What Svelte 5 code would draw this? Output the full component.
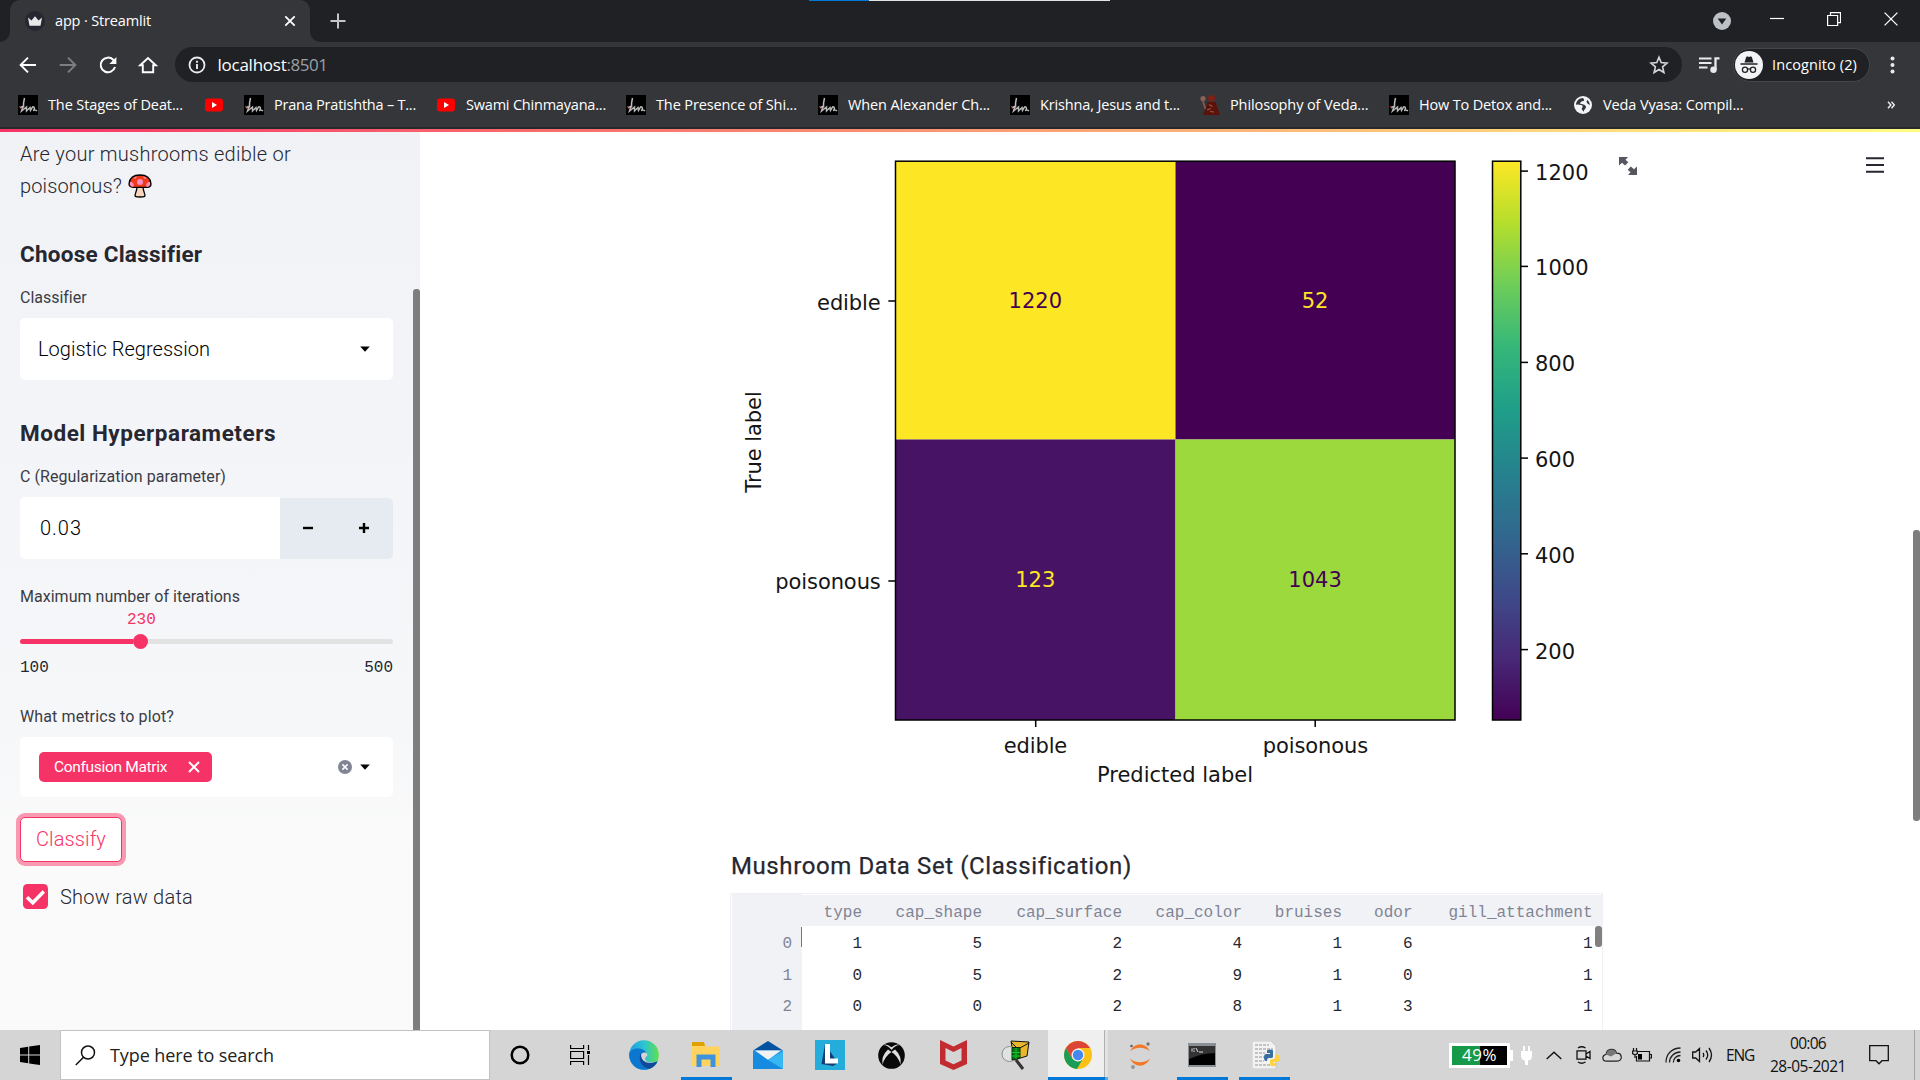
<script>
  // Spreads a label's letters so that it takes up the given width.
  function fit(node, width) {
    const natural = node.getBoundingClientRect().width;
    node.style.letterSpacing = `${(width - natural) / node.textContent.length}px`;
  }

  const bookmarks = [
    { icon: 'sign', text: 'The Stages of Deat...', x: 18, w: 135 },
    { icon: 'tube', text: '', x: 204, w: 0 },
    { icon: 'sign', text: 'Prana Pratishtha – T...', x: 244, w: 142 },
    { icon: 'tube', text: 'Swami Chinmayana...', x: 436, w: 140 },
    { icon: 'sign', text: 'The Presence of Shi...', x: 626, w: 141 },
    { icon: 'sign', text: 'When Alexander Ch...', x: 818, w: 142 },
    { icon: 'sign', text: 'Krishna, Jesus and t...', x: 1010, w: 140 },
    { icon: 'monk', text: 'Philosophy of Veda...', x: 1200, w: 138.5 },
    { icon: 'sign', text: 'How To Detox and...', x: 1389, w: 133 },
    { icon: 'globe', text: 'Veda Vyasa: Compil...', x: 1573, w: 140.5 }
  ].map((b, i, all) => ({ ...b, slot: (all[i + 1]?.x ?? 1886) - b.x }));

  const columns = ['type', 'cap_shape', 'cap_surface', 'cap_color', 'bruises', 'odor', 'gill_attachment'];
  const rows = [
    [1, 5, 2, 4, 1, 6, 1],
    [0, 5, 2, 9, 1, 0, 1],
    [0, 0, 2, 8, 1, 3, 1]
  ];

  const ticks = [
    { v: 1200, y: 171.1, w: 53.5 },
    { v: 1000, y: 266.4, w: 53.5 },
    { v: 800, y: 362.4, w: 40 },
    { v: 600, y: 458.1, w: 40 },
    { v: 400, y: 553.8, w: 40 },
    { v: 200, y: 649.6, w: 40 }
  ];
  const viridis = ['#fde725', '#b4de2c', '#6dcd59', '#35b779', '#1f9e89', '#26828e', '#31688e', '#3e4a89', '#482878', '#440154'];
</script>

{#snippet bookmarkIcon(kind)}
  {#if kind === 'sign'}
    <svg width="20" height="20" viewBox="0 0 20 20">
      <rect width="20" height="20" fill="#000" />
      <path d="M6.500 3c-.8 3-1.200 6-1 9.500" fill="none" stroke="#bdbdbd" stroke-width="1.500" />
      <path d="M2 12.500l3-1-1.500 4.500 5-4v4l3.500-3.500.5 2.800 2-3.300c2.500-1 2.500 3 .5 3.500 2-.5 2-1 4 .5" fill="none" stroke="#b8b8b8" stroke-width="1.500" />
      <path d="M1 11l2 3" stroke="#a3362c" />
    </svg>
  {:else if kind === 'tube'}
    <svg width="20" height="20" viewBox="0 0 20 20">
      <rect x="1" y="3.5" width="18" height="13" rx="3" fill="#f00" />
      <path d="M8 7v6l5-3z" fill="#fff" />
    </svg>
  {:else if kind === 'monk'}
    <svg width="20" height="20" viewBox="0 0 20 20">
      <circle cx="3" cy="3.500" r="2.600" fill="#8a6258" />
      <path d="M2.500 5l3 9" stroke="#8f5d52" stroke-width="1.500" />
      <circle cx="11.500" cy="3.300" r="3.300" fill="#842013" />
      <path d="M7.500 7h8l2 6 2.500 7H3l2.500-6z" fill="#5a1209" />
      <path d="M9 9.500l3.500 2M7 15l4-1.500M10 16.500l4 .5" stroke="#99564a" stroke-width="1.200" fill="none" />
    </svg>
  {:else}
    <svg width="20" height="20" viewBox="0 0 20 20">
      <circle cx="10" cy="10" r="9" fill="#f1f3f4" />
      <path d="M10 3C5 3 3 7 3 10c2-1 3 0 5 0s2 2 1 3 1 3 2 4c-1-2 2-3 2-5s-3-3-5-3 0-3 2-3 1-2 0-3zM14 5c-1 2 0 4 3 5-1-3-1-4-3-5z" fill="#35363a" />
    </svg>
  {/if}
{/snippet}

{#snippet caret()}
  <svg class="caret" width="10" height="6" viewBox="0 0 10 6"><path d="M.2.500h9.600L5 5.800z" fill="#000" /></svg>
{/snippet}

<div class="screen">
  <header class="tabs">
    <div class="tab">
      <svg width="20" height="20" viewBox="0 0 20 20">
        <circle cx="10" cy="10" r="10" fill="#262730" />
        <path d="M3 6.5l3.5 3L10 5.3l3.5 4.2 3.5-3-1.5 8.2h-11z" fill="#e8e8ea" />
      </svg>
      <span class="tab-title"><span use:fit={96}>app · Streamlit</span></span>
      <svg width="12" height="12" viewBox="0 0 12 12"><path d="M1.3 1.3l9.4 9.4M10.7 1.3l-9.4 9.4" stroke="#fff" stroke-width="1.8" /></svg>
    </div>
    <svg class="new-tab" width="16" height="16" viewBox="0 0 16 16"><path d="M8 .5v15M.5 8h15" stroke="#c3c5c8" stroke-width="2" /></svg>
    <div class="loading"></div>
    <div class="window-controls">
      <svg width="18" height="18" viewBox="0 0 18 18"><circle cx="9" cy="9" r="9" fill="#bdc1c6" /><path d="M4.7 6.5h8.6L9 12.5z" fill="#202124" /></svg>
      <svg width="14" height="14" viewBox="0 0 14 14"><path d="M0 6.500h14" stroke="#fff" stroke-width="1.2" /></svg>
      <svg width="14" height="14" viewBox="0 0 14 14"><path d="M.6 3.500h10v10h-10zM3.500 3V.6h10v10H11" fill="none" stroke="#fff" stroke-width="1.2" /></svg>
      <svg width="14" height="14" viewBox="0 0 14 14"><path d="M.6.6l12.800 12.800M13.400.6L.6 13.400" stroke="#fff" stroke-width="1.3" /></svg>
    </div>
  </header>

  <div class="toolbar">
    <nav class="nav">
      <svg width="20" height="20" viewBox="0 0 20 20"><path d="M18 10H3M10 2.600L2.600 10l7.400 7.400" fill="none" stroke="#fff" stroke-width="1.900" /></svg>
      <svg width="20" height="20" viewBox="0 0 20 20"><path d="M1.700 10H17M10 2.600l7.400 7.400-7.400 7.400" fill="none" stroke="#7d7e81" stroke-width="1.900" /></svg>
      <svg width="20" height="20" viewBox="0 0 20 20"><path d="M17 12a7.300 7.300 0 1 1-1.800-7.200L17 6.700" fill="none" stroke="#fff" stroke-width="2" /><path d="M18.400 2v7h-7z" fill="#fff" /></svg>
      <svg width="20" height="20" viewBox="0 0 20 20"><path d="M2.200 10.200L10 3l7.800 7.200h-2.600v7H4.800v-7z" fill="none" stroke="#fff" stroke-width="1.900" /></svg>
    </nav>
    <div class="address">
      <svg width="18" height="18" viewBox="0 0 18 18"><circle cx="9" cy="9" r="7.500" fill="none" stroke="#e8eaed" stroke-width="1.800" /><path d="M9 8v5M9 4.800v1.900" stroke="#e8eaed" stroke-width="1.900" /></svg>
      <span class="host"><span use:fit={69}>localhost</span><span class="port" use:fit={41}>:8501</span></span>
      <svg width="20" height="20" viewBox="0 0 20 20"><path d="M10 2.200l2.200 5.400 5.800.5-4.400 3.800 1.300 5.600-4.900-3-4.900 3 1.300-5.600L2 8.100l5.800-.5z" fill="none" stroke="#d3d5d8" stroke-width="1.600" /></svg>
    </div>
    <svg class="queue" width="22" height="18" viewBox="0 0 22 18"><path d="M0 2.500h12.500M0 7h12.500M0 11.500h8.500" stroke="#e8eaed" stroke-width="2.100" /><path d="M16.500 14V2.300H20.500" fill="none" stroke="#e8eaed" stroke-width="2.300" /><circle cx="14.500" cy="13.700" r="3.200" fill="#e8eaed" /></svg>
    <div class="profile">
      <svg width="28" height="28" viewBox="0 0 28 28">
        <circle cx="14" cy="14" r="14" fill="#f1f3f4" />
        <path d="M9.500 11.500l1.600-5.300c.3-.8 1-.7 2.900-.2 1.900-.5 2.600-.6 2.900.2l1.600 5.300zM5.500 12.300h17v1.500h-17z" fill="#202124" />
        <path d="M12.500 18.300q1.500-1 3 0" fill="none" stroke="#202124" stroke-width="1.200" />
        <circle cx="10" cy="18.800" r="2.600" fill="none" stroke="#202124" stroke-width="1.300" /><circle cx="18" cy="18.800" r="2.600" fill="none" stroke="#202124" stroke-width="1.300" />
      </svg>
      <span use:fit={85}>Incognito (2)</span>
    </div>
    <svg class="dots" width="5" height="18" viewBox="0 0 5 18"><circle cx="2.500" cy="2.500" r="2" fill="#e8eaed" /><circle cx="2.500" cy="9" r="2" fill="#e8eaed" /><circle cx="2.500" cy="15.500" r="2" fill="#e8eaed" /></svg>
  </div>

  <div class="bookmarks">
    {#each bookmarks as b}
      <div class="bookmark" style="width: {b.slot}px">
        {@render bookmarkIcon(b.icon)}
        {#if b.text}<span use:fit={b.w}>{b.text}</span>{/if}
      </div>
    {/each}
    <svg width="10" height="10" viewBox="0 0 10 10"><path d="M2 1.800L4.800 5l-2.800 3.200M5.500 1.800L8.300 5l-2.800 3.200" fill="none" stroke="#e8eaed" stroke-width="1.500" /></svg>
  </div>
  <div class="decoration"></div>

  <div class="page">
    <aside>
      <div class="side-body">
        <p class="intro">
          <span use:fit={271}>Are your mushrooms edible or</span>
          <span class="intro-end"><span use:fit={102}>poisonous?</span>
            <svg width="24" height="24" viewBox="0 0 24 24">
              <path d="M9 12.500c0 4-1.500 6.500-2 8.500-.2 1.500 1 2 5 2s5.200-.5 5-2c-.5-2-2-4.500-2-8.500z" fill="#f7d4bb" stroke="#000" stroke-width="1.300" />
              <path d="M1 10C1.500 4 6 1 12 1s10.500 3 11 9c0 2.500-2 3.300-4 3.300H5C3 13.300 1 12.500 1 10z" fill="#f03a17" stroke="#000" stroke-width="1.300" />
              <circle cx="12" cy="8" r="3" fill="#fb8cc0" /><path d="M2 8c3-.5 4.500 2.500 3.500 4.700C3 12.700 1.500 12 2 8zM22 8c-3-.5-4.500 2.500-3.500 4.700 2.500 0 4-.7 3.500-4.700zM5.500 4l3-1.800c.5 2-1.500 3.500-3 1.800zM18.500 4l-3-1.800c-.5 2 1.500 3.500 3 1.800z" fill="#fb8cc0" />
            </svg>
          </span>
        </p>

        <h2><span use:fit={182}>Choose Classifier</span></h2>
        <div class="label"><span use:fit={66}>Classifier</span></div>
        <div class="select">
          <span use:fit={172}>Logistic Regression</span>
          {@render caret()}
        </div>

        <h2><span use:fit={256}>Model Hyperparameters</span></h2>
        <div class="label"><span use:fit={206}>C (Regularization parameter)</span></div>
        <div class="number">
          <div class="number-value"><span use:fit={42}>0.03</span></div>
          <div class="steppers">
            <svg width="10" height="10" viewBox="0 0 10 10"><path d="M0 5h10" stroke="#000" stroke-width="2.400" /></svg>
            <svg width="10" height="10" viewBox="0 0 10 10"><path d="M0 5h10M5 0v10" stroke="#000" stroke-width="2.400" /></svg>
          </div>
        </div>

        <div class="label iterations"><span use:fit={220}>Maximum number of iterations</span></div>
        <div class="slider">
          <div class="slider-value">230</div>
          <div class="track"><div class="filled"></div><div class="thumb"></div></div>
          <div class="limits"><span>100</span><span>500</span></div>
        </div>

        <div class="label metrics"><span use:fit={154}>What metrics to plot?</span></div>
        <div class="select multi">
          <div class="tag">
            <span use:fit={113}>Confusion Matrix</span>
            <svg width="12" height="12" viewBox="0 0 12 12"><path d="M1 1l10 10M11 1L1 11" stroke="#fff" stroke-width="2" /></svg>
          </div>
          <svg class="clear" width="14" height="14" viewBox="0 0 14 14"><circle cx="7" cy="7" r="7" fill="#808495" /><path d="M4.400 4.400l5.200 5.200M9.600 4.400L4.400 9.600" stroke="#fff" stroke-width="1.500" /></svg>
          {@render caret()}
        </div>

        <button><span use:fit={70}>Classify</span></button>
        <div class="check">
          <svg width="25" height="25" viewBox="0 0 25 25"><rect width="25" height="25" rx="4.500" fill="#f63366" /><path d="M4 13.200l5.800 5.500L20.800 7.500" fill="none" stroke="#fff" stroke-width="3.600" /></svg>
          <span use:fit={133}>Show raw data</span>
        </div>
      </div>
      <div class="side-scroll"></div>
    </aside>

    <main>
      <svg class="chart" width="880" height="708" viewBox="730 132 880 708">
        <defs>
          <linearGradient id="viridis" x1="0" y1="0" x2="0" y2="1">
            {#each viridis as color, i}<stop offset={i / 9} stop-color={color} />{/each}
          </linearGradient>
        </defs>
        <rect x="896" y="161" width="279.500" height="278.500" fill="#fde725" />
        <rect x="1175.500" y="161" width="279.500" height="278.500" fill="#440154" />
        <rect x="896" y="439.500" width="279.500" height="280.500" fill="#471365" />
        <rect x="1175.500" y="439.500" width="279.500" height="280.500" fill="#9bd93c" />
        <rect x="895.500" y="161.200" width="559.500" height="558.800" fill="none" stroke="#000" stroke-width="1.500" />
        <rect x="1492.500" y="161.200" width="28.300" height="558.800" fill="url(#viridis)" stroke="#000" stroke-width="1.500" />
        <path d="M888.300 301h7M888.300 581h7M1035.700 720v7M1315.200 720v7" stroke="#000" stroke-width="1.500" />
        {#each ticks as t}
          <path d="M1521 {t.y}h7" stroke="#000" stroke-width="1.500" />
          <text x="1535" y={t.y + 9} textLength={t.w}>{t.v}</text>
        {/each}
        <text class="mid dark" x="1035.300" y="307.500" textLength="53.500">1220</text>
        <text class="mid bright" x="1315" y="307.500" textLength="26.500">52</text>
        <text class="mid bright" x="1035.300" y="586.500" textLength="40">123</text>
        <text class="mid dark" x="1315" y="586.500" textLength="53.500">1043</text>
        <text class="end" x="880.600" y="310" textLength="63.500">edible</text>
        <text class="end" x="880.800" y="589" textLength="105.500">poisonous</text>
        <text class="mid" x="1035.500" y="752.500" textLength="63.500">edible</text>
        <text class="mid" x="1315.500" y="752.500" textLength="105.500">poisonous</text>
        <text class="mid" x="1175" y="781.500" textLength="156">Predicted label</text>
        <text class="mid" transform="translate(761 442) rotate(-90)" textLength="101.500">True label</text>
      </svg>

      <h3><span use:fit={400}>Mushroom Data Set (Classification)</span></h3>
      <div class="frame">
        <div class="grid head">
          <span></span>
          {#each columns as c}<span>{c}</span>{/each}
        </div>
        {#each rows as row, i}
          <div class="grid">
            <span class="index">{i}</span>
            {#each row as cell}<span>{cell}</span>{/each}
          </div>
        {/each}
        <div class="index-scroll"></div>
        <div class="table-scroll"></div>
      </div>

      <svg class="expand" width="18" height="18" viewBox="0 0 18 18"><path d="M0 0h9L6.500 2.700l2.800 2.600-3.200 3.200L3 5.700 0 8.500zM18 18H9l2.500-2.700-2.800-2.600 3.200-3.200L15 12.300l3-2.800z" fill="#55565e" /></svg>
      <svg class="menu" width="18" height="16" viewBox="0 0 18 16"><path d="M0 1.200h18M0 8h18M0 14.800h18" stroke="#262730" stroke-width="2" /></svg>
      <div class="page-scroll"></div>
    </main>
  </div>

  <footer class="taskbar">
    <div class="start">
      <svg width="20" height="20" viewBox="0 0 20 20"><path d="M0 2.900l8.200-1.200v7.800H0zM9.200 1.500L20 0v9.500H9.200zM0 10.500h8.200v7.800L0 17.100zM9.200 10.500H20V20L9.200 18.500z" fill="#000" /></svg>
    </div>
    <div class="search">
      <svg width="21" height="21" viewBox="0 0 21 21"><circle cx="13" cy="7.500" r="6.500" fill="none" stroke="#111" stroke-width="1.500" /><path d="M8.500 12.200L.8 20" stroke="#111" stroke-width="1.500" /></svg>
      <span use:fit={164}>Type here to search</span>
    </div>
    <div class="apps">
      <div class="app"><svg width="20" height="20" viewBox="0 0 20 20"><circle cx="10" cy="10" r="8.300" fill="none" stroke="#000" stroke-width="2.500" /></svg></div>
      <div class="app view"><svg width="20" height="20" viewBox="0 0 20 20"><path d="M.6 0v3.500h13V0M.6 20v-3.500h13V20M.6 6.500h13v7H.6zM18.500 0v5M18.500 10v10" fill="none" stroke="#000" stroke-width="1.200" /><path d="M17 6h3v3h-3z" /></svg></div>
      <div class="app">
        <svg width="30" height="30" viewBox="0 0 30 30">
          <defs>
            <linearGradient id="edgeTop"><stop offset="0" stop-color="#1f9de0" /><stop offset=".5" stop-color="#2cc3d5" /><stop offset="1" stop-color="#5fe04b" /></linearGradient>
          </defs>
          <circle cx="15" cy="15" r="14.800" fill="url(#edgeTop)" />
          <path d="M.2 14C1 9.500 6 8.300 9.500 8.500c6 .3 8.500 4 8.500 7 0 2-1.500 2.500-1.500 4 0 2 3 3 6 3s5.500-1.300 6-1C26 27 21 29.800 15 29.800 6 29.800 0 22.500.2 14z" fill="#0d76cf" />
          <path d="M11.500 14c-2.500 6 1 13.500 9 14.700 3.500-1.200 6.500-4 8-7.200-2 1-4 1.300-6 1.300-7 0-8.500-3-8-6.500z" fill="#10499a" />
          <path d="M12 15c1-4 8-3 6 1-1 1.500-2 2-1.500 4 1.500 3 7 2.500 10 1.500-5 3-14 1.500-14.500-6.500z" fill="#d4d4d4" />
        </svg>
      </div>
      <div class="app open"><svg width="28" height="26" viewBox="0 0 28 26"><path d="M0 1h11.500l2 3.500H28V24H0z" fill="#ffd35d" /><path d="M0 0h12l1 4H0z" fill="#e0a100" /><path d="M4.500 12.500h19V25h-5v-7.500h-9V25h-5z" fill="#3f93dc" /></svg></div>
      <div class="app"><svg width="30" height="28" viewBox="0 0 30 28"><path d="M0 9.500L15 0l15 9.500z" fill="#0553a0" /><path d="M0 9.500h30V28H0z" fill="#1f8ee6" /><path d="M2 9.500h26L15 19z" fill="#f2f2f2" /><path d="M30 10L12 20.500 0 28h30z" fill="#36b7f2" /><path d="M0 10l15 9 15 9H0z" fill="#178be0" /></svg></div>
      <div class="app"><svg width="30" height="30" viewBox="0 0 30 30"><path d="M0 0h30v30H0z" fill="#24acdb" /><path d="M10 4L6.500 24 18 26l5-3z" fill="#153d72" /><path d="M10 4h5v14.500h8v5H10z" fill="#fff" /></svg></div>
      <div class="app"><svg width="27" height="27" viewBox="0 0 27 27"><circle cx="13.500" cy="13.500" r="13.300" fill="#090909" /><path d="M5.500 3q3-1.500 8 2.200Q18.500 1.500 21.500 3q-4 0-8 5-4-5-8-5zM10 7.500Q3 14 4.500 22.500 7 14 13.500 10q6.500 4 9 12.500Q24 14 17 7.500L13.500 10z" fill="#ddd" /></svg></div>
      <div class="app"><svg width="27" height="30" viewBox="0 0 27 30"><path d="M0 0l13.500 6.500L27 0v24l-13.500 6L0 24zM5.500 8v12.500l8 3.700 8-3.700V8l-8 4z" fill="#c22c31" fill-rule="evenodd" /></svg></div>
      <div class="app"><svg width="30" height="30" viewBox="0 0 30 30"><path d="M10 1l18 1-2 14-13 4z" fill="#e9b72c" stroke="#111" /><path d="M10 2l7 7 11-6" fill="none" stroke="#111" /><circle cx="8.500" cy="14" r="7.500" fill="#dfe3e1" stroke="#8d8d8d" /><path d="M11 7.500h8V18l-8 2z" fill="#0a7514" stroke="#042b06" /><path d="M15 8v11M11 12.500h8M11 16h8" stroke="#15c62a" /><path d="M15 20l7 9" stroke="#333" stroke-width="3" /></svg></div>
      <div class="app open active">
        <svg width="28" height="28" viewBox="0 0 28 28"><circle cx="14" cy="14" r="14" fill="#fbc116" /><path d="M14 7h12.100A14 14 0 0 0 1.900 7l6 10.500z" fill="#dc4437" /><path d="M1.900 7A14 14 0 0 0 13 28l6-10.500-5 3-6-3z" fill="#1b9c58" /><circle cx="14" cy="14" r="6.500" fill="#f4f4f4" /><circle cx="14" cy="14" r="5.200" fill="#4688f1" /></svg>
      </div>
      <div class="app"><svg width="24" height="28" viewBox="0 0 24 28"><path d="M2 10.500C6 1 18 1 22 10.500 17 5.500 7 5.500 2 10.500zM2 17.500C6 27 18 27 22 17.500 17 22.500 7 22.500 2 17.500z" fill="#f37726" /><circle cx="3.500" cy="5" r="1.300" fill="#616262" /><circle cx="20" cy="3" r="1.700" fill="#767677" /><circle cx="5" cy="26" r="2" fill="#989798" /></svg></div>
      <div class="app open"><svg width="28" height="24" viewBox="0 0 28 24"><path d="M0 0h28v24H0z" fill="#8b9096" /><path d="M1 3h26v19H1z" fill="#000" /><path d="M1 3h26v7q-13 0-26 6z" fill="#333" /><path d="M4 5.500v3M6 5v1.500M6 7.500V9M8 5l2 4M11 9h4" stroke="#ddd" fill="none" /></svg></div>
      <div class="app open python"><svg width="28" height="28" viewBox="0 0 28 28"><path d="M0 0h19l5 5v23H0z" fill="#f2f2f2" stroke="#c8c8c8" /><path d="M3 4h14M3 8h18M3 12h10M3 16h9M3 20h9M3 24h16" stroke="#b4b4b4" stroke-width="1.300" stroke-dasharray="3 1" /><path d="M15 10q0-1.500 3-1.500t3 1.500v5.500q0 1.500-2 1.500h-2q-2 0-2 3h-1q-2 0-2-3.500t2-3.500h4v-1h-3z" fill="#386f9f" /><path d="M23 13.500h2q2.500 0 2.500 3.800T25 21h-4v1h3v1.500q0 1.700-3 1.700t-3-1.700v-4q0-1.500 2-1.500h1.500q1.500 0 1.500-2z" fill="#ffd242" /></svg></div>
    </div>
    <div class="tray">
      <div class="battery"><div class="charge"></div><span use:fit={35}>49%</span></div>
      <svg class="plug" width="11" height="19" viewBox="0 0 11 19"><path d="M2 0h2v5h3V0h2v5h2v5q0 4-4 4.500V19H4v-4.500Q0 14 0 10V5h2z" fill="#fff" /></svg>
      <svg class="up" width="16" height="9" viewBox="0 0 16 9"><path d="M.7 8L8 1.200 15.300 8" fill="none" stroke="#111" stroke-width="1.400" /></svg>
      <svg class="meet" width="15" height="18" viewBox="0 0 15 18"><path d="M1 4.800h9v8.400H1zM10 8l4-2.500v7L10 10M2 2q3.500-2.500 7.500 0M2 16q3.500 2.500 7.500 0" fill="none" stroke="#111" stroke-width="1.300" /></svg>
      <svg class="cloud" width="20" height="14" viewBox="0 0 20 14"><path d="M4.500 13.200C0 13.200-.5 7.500 4 6.500 5 0 13 0 14.500 5.200c6-.2 6.500 8 .5 8z" fill="#d8d8d8" stroke="#222" stroke-width="1.200" /><path d="M4 6.500C5 0 13 0 14.500 5.200L9 8.500z" fill="#777" /></svg>
      <svg class="power" width="20" height="15" viewBox="0 0 20 15"><path d="M6 3.500h11.500v9.500H4.500V8M17.500 6.500H19.500v3.500h-2M1.500 0v3M4.500 0v3M.6 3h4.800v2.500q-2.400 2.500-4.800 0zM3 7v3" fill="none" stroke="#111" stroke-width="1.200" /><path d="M6 6h4v5.500H6z" /></svg>
      <svg class="wifi" width="16" height="16" viewBox="0 0 16 16"><path d="M1 15.500C1 7 7 1 15.500 1M4.500 15.500c0-6 5-10.500 11-10.500M8.300 15.500c0-4 3.200-7 7.200-7" fill="none" stroke="#222" stroke-width="1.300" /><circle cx="13.500" cy="13.500" r="1.800" /></svg>
      <svg class="sound" width="21" height="18" viewBox="0 0 21 18"><path d="M.7 6h3L7.500 2.500v13L3.700 12h-3zM11 7q1.500 2 0 4M14 4.500q3.500 4.500 0 9M17 2q5 7 0 14" fill="none" stroke="#111" stroke-width="1.300" /></svg>
      <span class="lang"><span use:fit={28}>ENG</span></span>
      <div class="clock"><span use:fit={36}>00:06</span><span use:fit={76}>28-05-2021</span></div>
      <svg class="notes" width="20" height="20" viewBox="0 0 20 20"><path d="M.7.7h18.600v15H13L10 18.800 7 15.700H.7z" fill="none" stroke="#111" stroke-width="1.300" /></svg>
      <div class="desktop"></div>
    </div>
  </footer>
</div>

<style>
  :global(body) { margin: 0; overflow: hidden; }
  svg { display: block; flex: none; }
  span { white-space: nowrap; }
  .screen {
    width: 1920px; height: 1080px; display: flex; flex-direction: column; overflow: hidden;
    font-family: "Open Sans", "Noto Sans", sans-serif; font-size: 14.5px; background: #fff;
  }

  .tabs { position: relative; display: flex; align-items: center; height: 42px; flex: none; background: #202124; }
  .tab {
    position: relative; box-sizing: border-box; width: 300px; height: 42px; margin-left: 10px; padding: 0 14px 0 15px;
    display: flex; align-items: center; background: #35363a; color: #fff; border-radius: 10px 10px 0 0;
  }
  .tab::before, .tab::after { content: ""; position: absolute; bottom: 0; width: 10px; height: 10px; }
  .tab::before { left: -10px; background: radial-gradient(circle at 0 0, #202124 9.5px, #35363a 10px); }
  .tab::after { right: -10px; background: radial-gradient(circle at 100% 0, #202124 9.5px, #35363a 10px); }
  .tab-title { flex: 1; margin-left: 10px; line-height: 20px; }
  .tab-title span { display: inline-block; }
  .new-tab { margin-left: 19.5px; }
  .loading { position: absolute; left: 809px; top: 0; width: 301px; height: 1px; background: linear-gradient(90deg, #0078d7 60px, #e1e5e3 60px); }
  .window-controls { margin-left: auto; padding-right: 22px; display: flex; gap: 43px; align-items: flex-start; height: 30px; }
  .window-controls svg { margin-top: 0; }
  .window-controls svg:first-child { margin: 0 -4px 0 0; }
  .tabs .window-controls { height: auto; align-self: flex-start; padding-top: 12px; }

  .toolbar { display: flex; align-items: center; height: 45px; flex: none; background: #35363a; color: #fff; }
  .nav { display: flex; gap: 20px; width: 157.5px; padding-left: 17.5px; }
  .address { box-sizing: border-box; width: 1507px; height: 35px; padding: 0 13px; display: flex; align-items: center; background: #202124; border-radius: 18px; }
  .host { flex: 1; margin-left: 11.5px; display: flex; font-size: 17px; line-height: 22px; }
  .port { color: #9aa0a6; }
  .queue { margin-left: 17px; }
  .profile { box-sizing: border-box; margin-left: 12px; width: 137px; height: 34px; border: 1px solid #45464a; border-radius: 17px; display: flex; align-items: center; gap: 9px; padding-left: 1px; background: #202124; }
  .dots { margin-left: 20px; }
  .bookmarks { display: flex; align-items: center; box-sizing: border-box; height: 40px; padding: 0 0 4px 18px; flex: none; background: #35363a; color: #fff; }
  .bookmark { display: flex; align-items: center; gap: 10px; flex: none; }
  .bookmark span { padding-bottom: 2px; }
  .decoration { height: 5px; flex: none; box-sizing: border-box; border-top: 2px solid #28292c; background: linear-gradient(90deg, #f63366, #fffd80); }

  .page { flex: 1; min-height: 0; display: flex; }
  aside { display: flex; width: 420px; height: 898px; background: linear-gradient(180deg, #f0f2f6, #f6f7f9 66%, #fafafa 80%); color: #262730; font-family: Roboto, sans-serif; font-weight: 300; }
  .side-body { width: 373px; padding-left: 20px; display: flex; flex-direction: column; }
  .intro { margin: 6px 0 37px; font-size: 20px; line-height: 32px; display: flex; flex-direction: column; align-items: flex-start; }
  .intro-end { display: flex; align-items: center; gap: 6px; }
  h2 { margin: 0 0 19px; font-size: 22.5px; line-height: 30px; font-weight: 700; }
  h2 span, h3 span, .label span { display: inline-block; }
  .label { font-size: 16px; line-height: 20px; height: 20px; font-weight: 400; color: #3b3c45; }
  .select { box-sizing: border-box; margin: 10px 0 38px; height: 62px; padding: 0 23px 0 18px; border-radius: 5px; background: #fff; color: #000; display: flex; align-items: center; font-size: 20px; }
  .caret { margin-left: auto; }
  .number { display: flex; height: 62px; margin-top: 10px; color: #000; }
  .number-value { width: 240px; padding-left: 20px; font-size: 20px; line-height: 62px; background: #fff; border-radius: 5px 0 0 5px; }
  .steppers { width: 113px; margin-top: 1px; padding: 0 0 2px 23px; display: flex; align-items: center; gap: 46px; box-sizing: border-box; background: #e6eaf1; border-radius: 0 5px 5px 0; }
  .iterations { margin-top: 28px; }
  .slider { font: 16px/20px "Liberation Mono", monospace; margin-top: 3px; }
  .slider-value { padding-left: 107px; color: #f63366; }
  .track { display: flex; align-items: center; height: 5px; margin-top: 9px; background: #e2e2e2; border-radius: 3px; }
  .filled { width: 113px; height: 5px; background: #f63366; border-radius: 3px 0 0 3px; }
  .thumb { width: 15px; height: 15px; border-radius: 50%; background: #f63366; flex: none; }
  .limits { display: flex; justify-content: space-between; margin-top: 14px; }
  .metrics { margin-top: 29px; }
  .multi { height: 60px; margin-bottom: 20px; padding-left: 19px; }
  .tag { box-sizing: border-box; width: 173px; height: 30px; padding: 0 12px 0 15px; display: flex; align-items: center; justify-content: space-between; border-radius: 5px; background: #f63366; color: #fff; font-size: 15.5px; font-weight: 400; }
  .clear { margin-left: auto; }
  .multi .clear + :global(.caret) { margin-left: 8px; }
  button { box-sizing: border-box; width: 102px; height: 45px; padding: 0 0 2px; border: 1px solid #f63366; border-radius: 5px; background: #fff; box-shadow: 0 0 0 4px #f999b1; color: #f63366; font: 300 20px Roboto, sans-serif; }
  .check { display: flex; align-items: center; gap: 12px; margin: 22px 0 0 3px; font-size: 20px; }
  .side-scroll { margin: 157px 0 0 20px; width: 7px; background: #7e7e7e; border-radius: 3px 3px 0 0; }

  main { position: relative; width: 1500px; height: 898px; box-sizing: border-box; padding-left: 310px; overflow: hidden; }
  .chart text { font: 21px "DejaVu Sans", sans-serif; fill: #151515; }
  .chart .dark { fill: #440154; }
  .chart .bright { fill: #fde725; }
  .mid { text-anchor: middle; }
  .end { text-anchor: end; }
  h3 { margin: 11px 0 0 1px; height: 42px; font: 400 24px/31px Roboto, sans-serif; color: #262730; -webkit-text-stroke: 0.25px #262730; }
  .frame {
    position: relative; box-sizing: border-box; width: 873px; height: 150px; border: 1px solid #eff0f4; padding: 1px 0 0 1px;
    font: 16px/36px "Liberation Mono", monospace; color: #262730; overflow: hidden;
    background: linear-gradient(90deg, #fff 1px, #f0f2f6 1px, #f0f2f6 71px, #fff 71px);
  }
  .grid { display: grid; grid-template-columns: 70px 70px 120px 140px 120px 100px 70.5px 180px; height: 31.5px; }
  .grid span { text-align: right; padding-right: 10px; }
  .head { background: #f0f2f6; color: #808495; height: 31px; }
  .grid .index { color: #808495; }
  .index-scroll { position: absolute; left: 70px; top: 33px; width: 1px; height: 20px; background: #77787d; }
  .table-scroll { position: absolute; right: 0; top: 32px; width: 7px; height: 21px; background: #808080; border-radius: 3px; }
  .expand { position: absolute; left: 1199px; top: 25px; }
  .menu { position: absolute; left: 1446px; top: 25px; }
  .page-scroll { position: absolute; right: 0; top: 398px; width: 7px; height: 291px; background: #7e7e7e; border-radius: 3px; }

  .taskbar { display: flex; height: 50px; flex: none; background: #d5d5d5; color: #111; }
  .start { width: 60px; display: flex; align-items: center; justify-content: center; }
  .search { box-sizing: border-box; width: 430px; border: 1px solid #c3c3c3; background: #fff; display: flex; align-items: center; gap: 14px; padding-left: 14px; font-size: 18px; color: #222; }
  .apps { display: flex; gap: 2px; }
  .app { box-sizing: border-box; width: 60px; padding-right: 1px; display: flex; align-items: center; justify-content: center; background: linear-gradient(#0078d7, #0078d7) no-repeat center bottom / 0 3px; }
  .open { background-size: 51px 3px; }
  .view { padding-right: 4px; }
  .python { padding: 0 0 0 3px; }
  .active {
    background: linear-gradient(90deg, #0078d7 57px, #5fa5e0 57px) no-repeat bottom / 100% 3px,
      linear-gradient(90deg, #efefef 56px, #b0b0b0 56px, #b0b0b0 57px, #e2e2e2 57px);
  }
  .tray { margin-left: auto; display: flex; align-items: center; font-size: 15.5px; }
  .battery { position: relative; box-sizing: border-box; width: 61px; height: 25px; border: 3px solid #fff; background: #000; color: #fff; display: flex; align-items: center; justify-content: center; font-size: 17px; line-height: 19px; }
  .battery::after { content: ""; position: absolute; right: -6px; top: 4px; width: 3px; height: 11px; background: #fff; }
  .charge { position: absolute; left: 0; top: 0; width: 28px; height: 19px; background: #179a48; }
  .battery span { z-index: 1; padding-bottom: 2px; }
  .plug { margin-left: 11px; }
  .up { margin-left: 14px; }
  .meet { margin-left: 14px; }
  .cloud { margin-left: 11px; }
  .power { margin-left: 10px; }
  .wifi { margin-left: 13px; }
  .sound { margin-left: 11px; }
  .lang { margin-left: 13px; width: 28px; }
  .clock { width: 108px; display: flex; flex-direction: column; align-items: center; line-height: 23px; }
  .notes { margin-left: 7px; }
  .desktop { width: 6px; height: 50px; margin-left: 25px; box-sizing: border-box; border-left: 1px solid #a5a5a5; }
</style>
